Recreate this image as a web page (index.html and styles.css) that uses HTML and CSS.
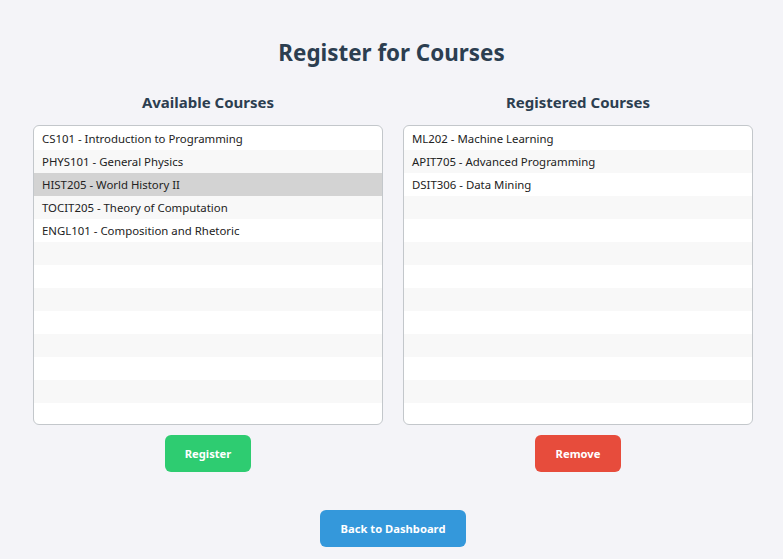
FILE: index.html
```html
<!DOCTYPE html>
<html>
<head>
<meta charset="utf-8">
<link rel="stylesheet" href="styles.css">
</head>
<body>
<div class="page">
  <h1 class="title">Register for Courses</h1>
  <div class="columns">
    <div class="column">
      <h2 class="heading">Available Courses</h2>
      <div class="list">
        <div class="row">CS101 - Introduction to Programming</div>
        <div class="row">PHYS101 - General Physics</div>
        <div class="row selected">HIST205 - World History II</div>
        <div class="row">TOCIT205 - Theory of Computation</div>
        <div class="row">ENGL101 - Composition and Rhetoric</div>
        <div class="row"></div><div class="row"></div><div class="row"></div><div class="row"></div>
        <div class="row"></div><div class="row"></div><div class="row"></div><div class="row"></div>
      </div>
      <button class="btn btn-green">Register</button>
    </div>
    <div class="column">
      <h2 class="heading">Registered Courses</h2>
      <div class="list">
        <div class="row">ML202 - Machine Learning</div>
        <div class="row">APIT705 - Advanced Programming</div>
        <div class="row">DSIT306 - Data Mining</div>
        <div class="row"></div><div class="row"></div><div class="row"></div><div class="row"></div>
        <div class="row"></div><div class="row"></div><div class="row"></div><div class="row"></div>
        <div class="row"></div><div class="row"></div>
      </div>
      <button class="btn btn-red">Remove</button>
    </div>
  </div>
  <div class="footer">
    <button class="btn btn-blue">Back to Dashboard</button>
  </div>
</div>
</body>
</html>
```
FILE: styles.css
```css
html, body {
  margin: 0;
  padding: 0;
  background: #f4f4f8;
  font-family: "Noto Sans", "Open Sans", sans-serif;
  color: #2c3e50;
}
.page {
  padding-top: 37px;
  display: flex;
  flex-direction: column;
  align-items: center;
}
.title {
  margin: 0;
  font-size: 22.4px;
  line-height: 32px;
  font-weight: 700;
  color: #2c3e50;
}
.columns {
  display: grid;
  grid-template-columns: 350px 350px;
  column-gap: 20px;
  margin-top: 22px;
  padding-left: 3px;
}
.column {
  display: flex;
  flex-direction: column;
  align-items: center;
}
.heading {
  margin: 0;
  font-size: 15px;
  line-height: 22px;
  font-weight: 700;
  color: #2c3e50;
}
.list {
  margin-top: 12px;
  width: 350px;
  height: 300px;
  box-sizing: border-box;
  border: 1px solid #c3c7cb;
  border-radius: 6px;
  background: #fff;
  padding-top: 1px;
  overflow: hidden;
}
.row {
  height: 23px;
  line-height: 23px;
  padding-left: 8px;
  font-size: 11.4px;
  color: #222;
  white-space: nowrap;
}
.row:nth-child(even) {
  background: #f8f8f8;
}
.row.selected {
  background: #d3d3d3;
}
.btn {
  border: none;
  border-radius: 6px;
  color: #fff;
  font-family: "Noto Sans", "Open Sans", sans-serif;
  font-weight: 700;
  font-size: 11.2px;
  height: 37px;
  padding: 0;
  white-space: nowrap;
  cursor: pointer;
}
.column .btn {
  margin-top: 10px;
}
.btn-green { background: #2ecc71; width: 86px; }
.btn-red { background: #e74c3c; width: 86px; }
.btn-blue { background: #3498db; width: 146px; }
.footer {
  margin-top: 38px;
  padding-left: 3px;
}
```
